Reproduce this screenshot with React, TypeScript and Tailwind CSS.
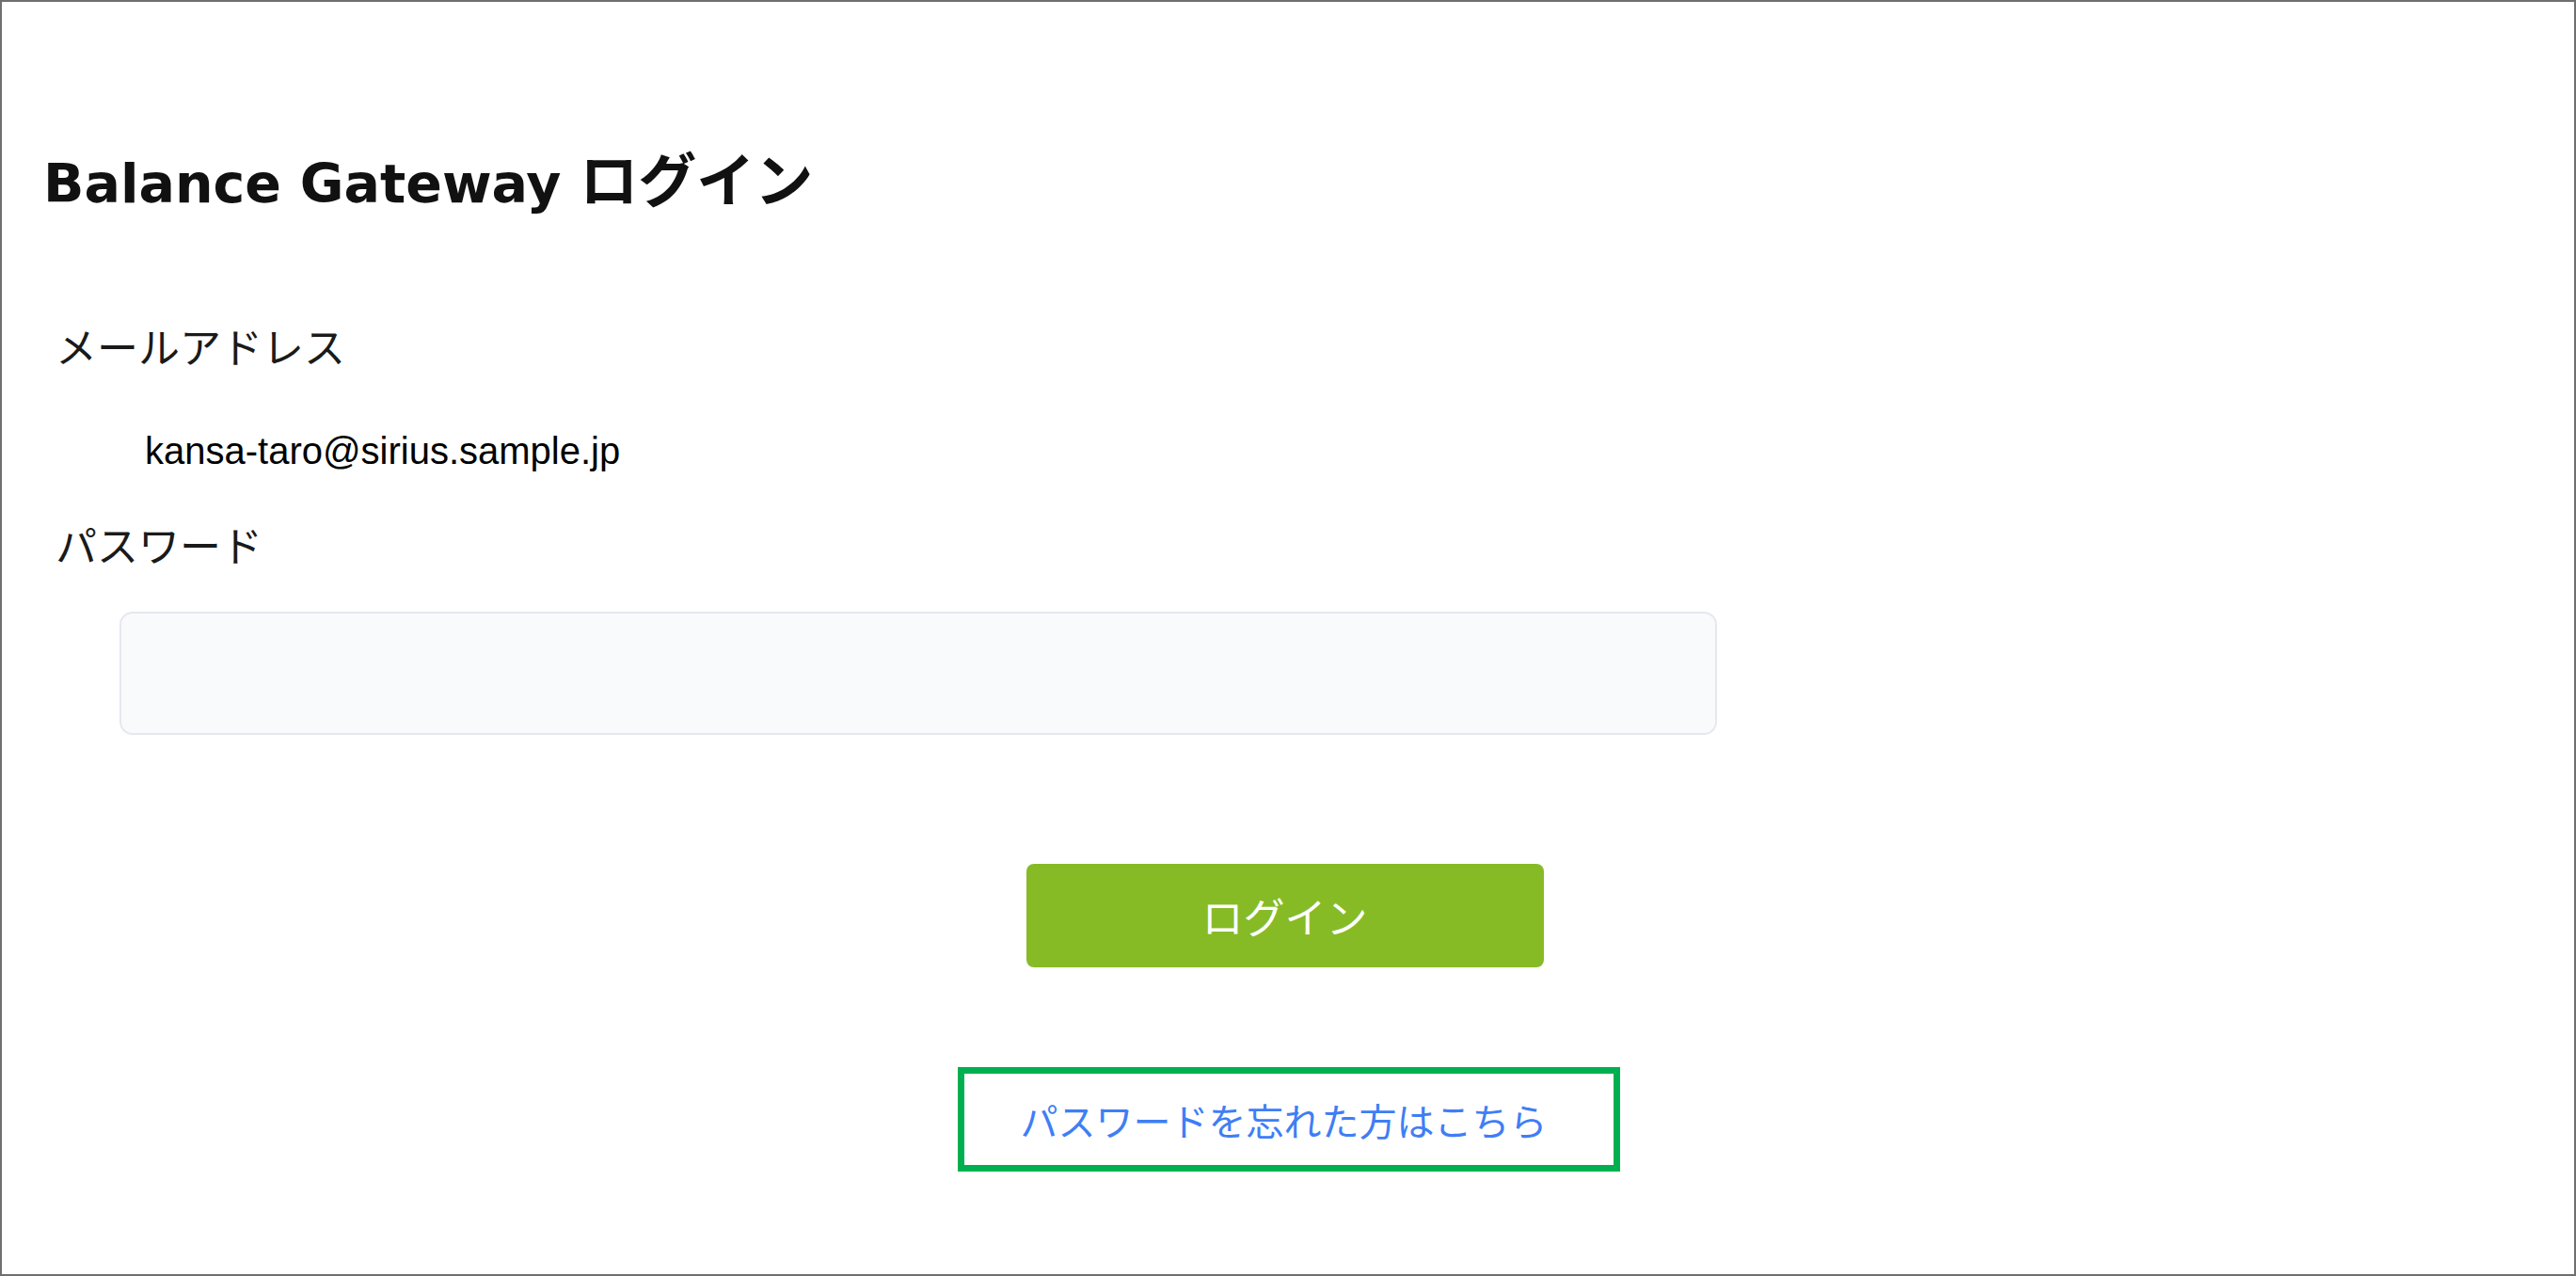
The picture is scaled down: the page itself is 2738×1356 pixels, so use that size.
import React from "react";

const jp = "font-['Noto_Sans_CJK_JP',sans-serif]";

const App: React.FC = () => {
    return (
        <div className="box-border h-[1356px] w-full border-2 border-[#6f6f6f] bg-white">
            {/* Header + form fields */}
            <div className="pl-[44px] pt-[160px]">
                <h1 className="font-['DejaVu_Sans','Noto_Sans_CJK_JP',sans-serif] text-[57px] font-bold leading-[64px] text-[#111]">
                    Balance Gateway <span className="text-[62px]">ログイン</span>
                </h1>

                <div className="mt-[112px] pl-[13px]">
                    <p className={`${jp} text-[44px] leading-[56px] text-[#1a1a1a]`}>メールアドレス</p>
                    <p className="mt-[60px] pl-[95px] font-['Liberation_Sans',Arial,sans-serif] text-[40px] leading-[48px] text-black">
                        kansa-taro@sirius.sample.jp
                    </p>
                    <p className={`${jp} mt-[47px] text-[44px] leading-[56px] text-[#1a1a1a]`}>パスワード</p>
                </div>

                <div className="mt-[44px] ml-[81px] box-border h-[131px] w-[1698px] rounded-[14px] border-2 border-[#e6e8ee] bg-[#f9fafc]" />
            </div>

            {/* Actions */}
            <div className="mt-[137px] flex flex-col items-center pr-[7px]">
                <button
                    type="button"
                    className={`${jp} flex h-[110px] w-[550px] items-center justify-center rounded-[8px] bg-[#86bb26] text-[44px] text-white`}
                >
                    ログイン
                </button>

                <div className="mt-[106px] ml-[8px] box-border flex h-[111px] w-[704px] items-center border-[7px] border-[#00b050] pl-[60px]">
                    <a className={`${jp} text-[40px] leading-[48px] text-[#3f7ef5]`}>パスワードを忘れた方はこちら</a>
                </div>
            </div>
        </div>
    );
};

export default App;
